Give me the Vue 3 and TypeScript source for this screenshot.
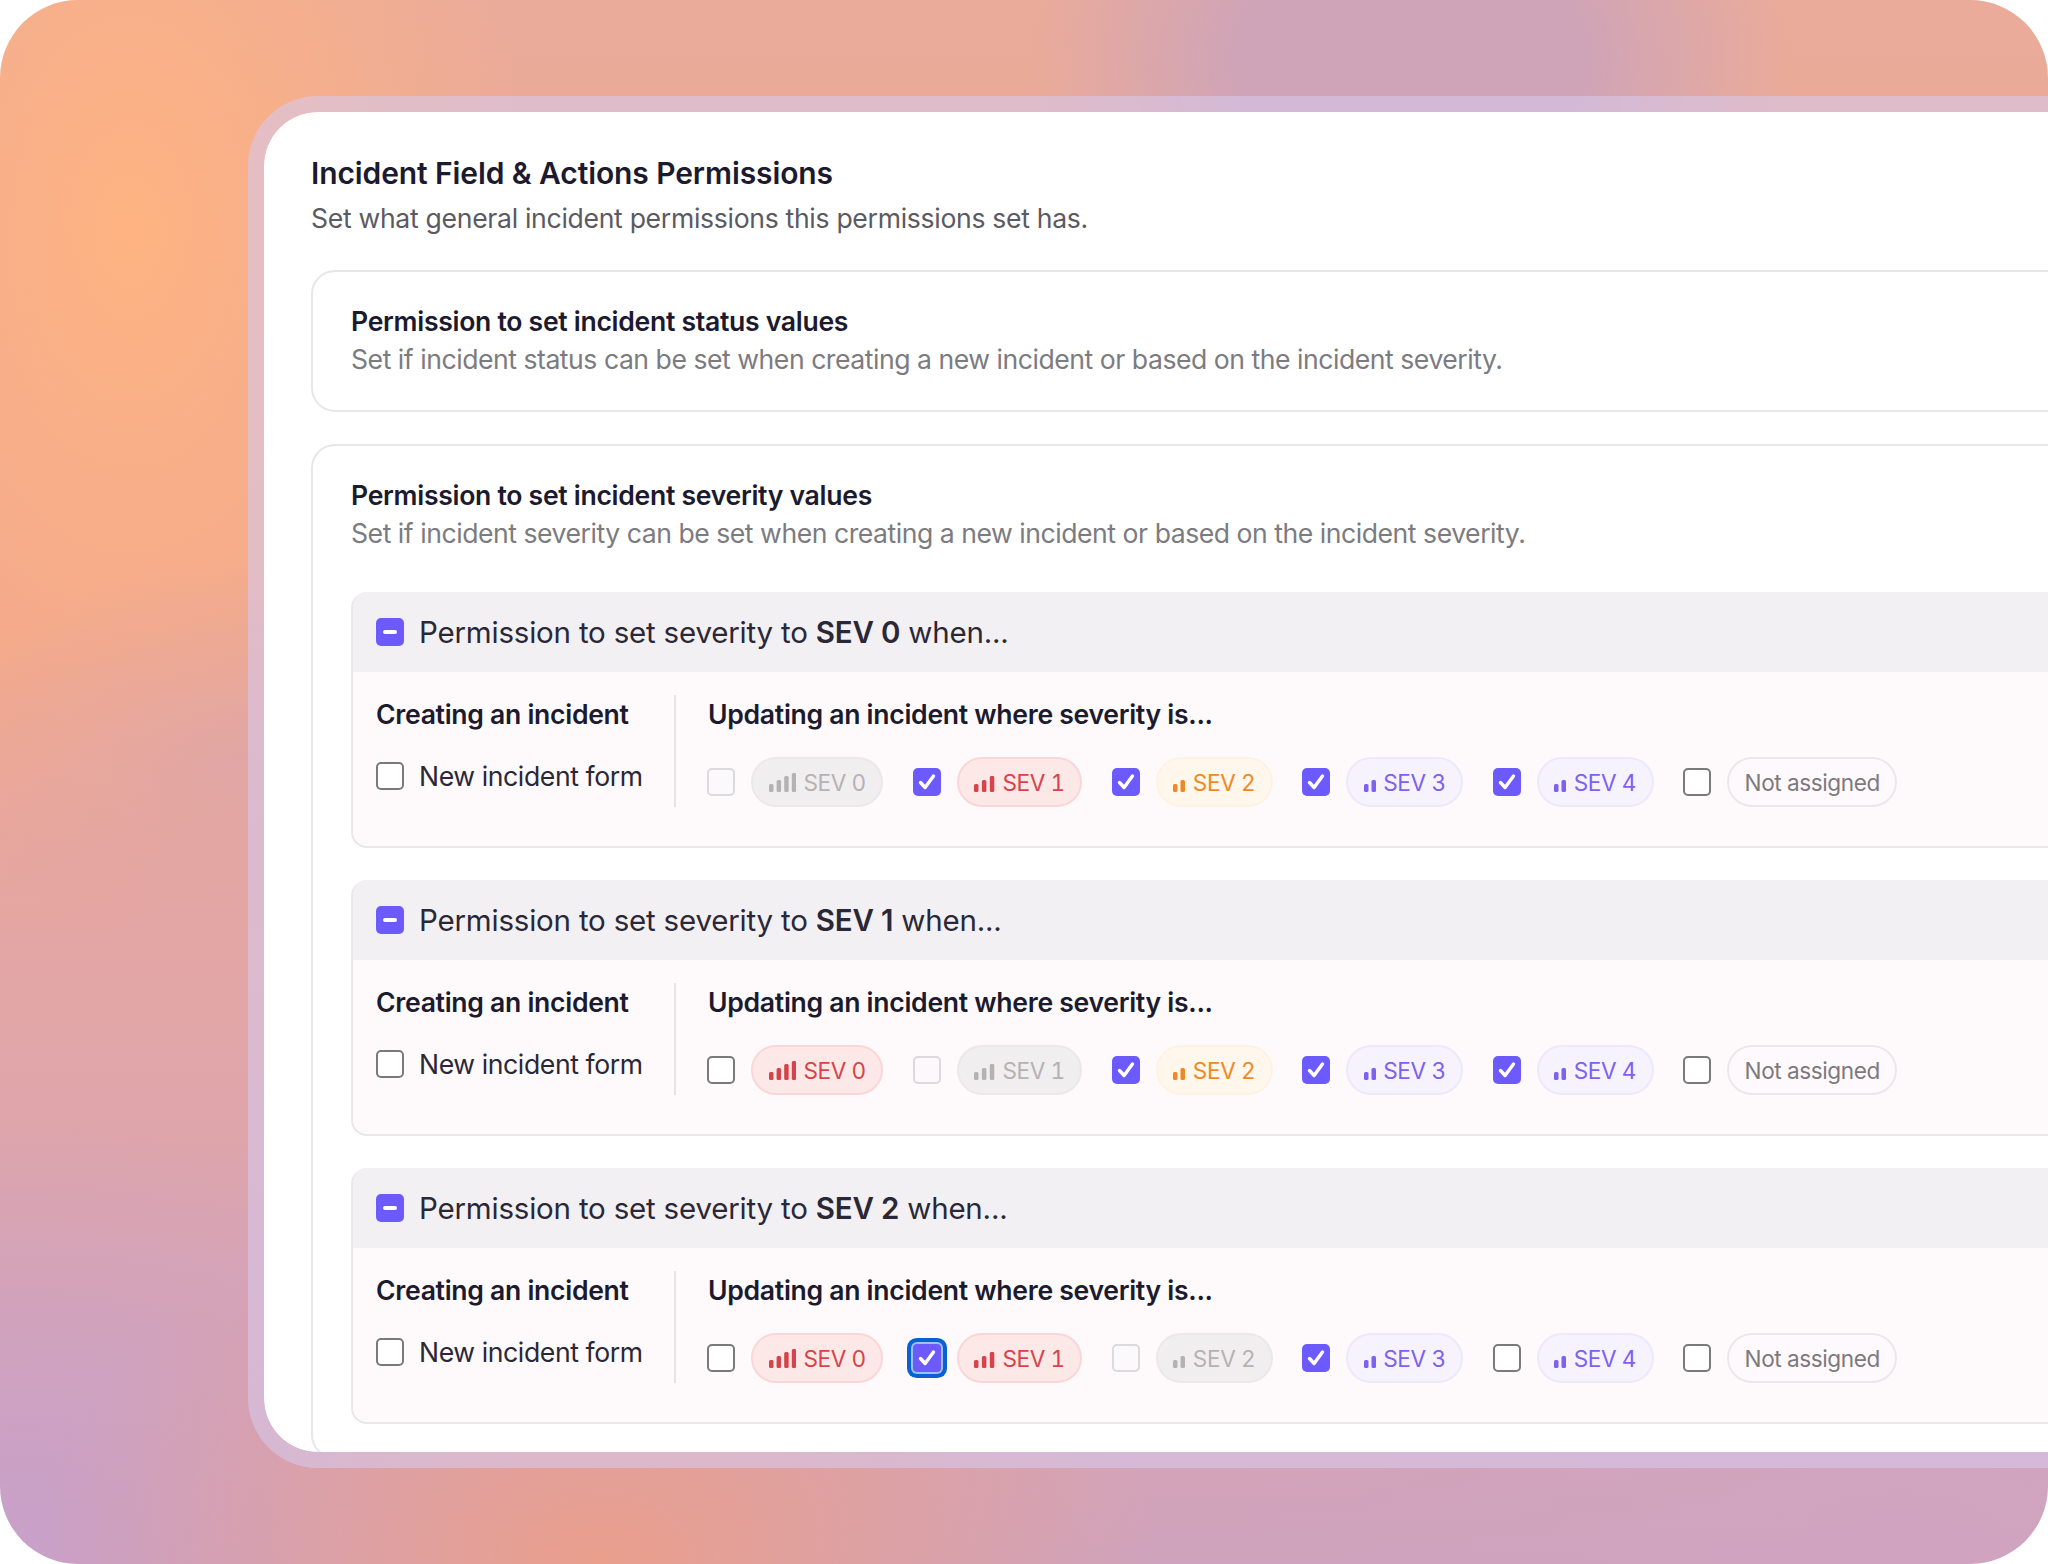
<script setup lang="ts">
type Tone = 'red' | 'orange' | 'purple' | 'muted' | 'plain'
type State = 'off' | 'on' | 'disabled' | 'focus'

interface Option {
  label: string
  bars: number
  tone: Tone
  state: State
}

interface Group {
  sev: string
  options: Option[]
}

const barHeights = [8, 12, 16, 19]

// spacing differs a little per icon in the design
function barStep(count: number) {
  if (count === 4) return 7.6
  return count === 3 ? 7.9 : 7.5
}

function barsWidth(count: number) {
  return count * barStep(count) - 3
}

function makeOptions(states: State[], disabledAt: number): Option[] {
  const base: { label: string; bars: number; tone: Tone }[] = [
    { label: 'SEV 0', bars: 4, tone: 'red' },
    { label: 'SEV 1', bars: 3, tone: 'red' },
    { label: 'SEV 2', bars: 2, tone: 'orange' },
    { label: 'SEV 3', bars: 2, tone: 'purple' },
    { label: 'SEV 4', bars: 2, tone: 'purple' },
    { label: 'Not assigned', bars: 0, tone: 'plain' },
  ]
  return base.map((o, i) => ({
    ...o,
    tone: i === disabledAt ? 'muted' : o.tone,
    state: states[i],
  }))
}

const groups: Group[] = [
  { sev: 'SEV 0', options: makeOptions(['disabled', 'on', 'on', 'on', 'on', 'off'], 0) },
  { sev: 'SEV 1', options: makeOptions(['off', 'disabled', 'on', 'on', 'on', 'off'], 1) },
  { sev: 'SEV 2', options: makeOptions(['off', 'focus', 'disabled', 'on', 'off', 'off'], 2) },
]
</script>

<template>
  <div class="page">
    <main class="card">
      <h1>Incident Field &amp; Actions Permissions</h1>
      <p class="lead">Set what general incident permissions this permissions set has.</p>

      <section class="box first">
        <h2>Permission to set incident status values</h2>
        <p>Set if incident status can be set when creating a new incident or based on the incident severity.</p>
      </section>

      <section class="box">
        <h2>Permission to set incident severity values</h2>
        <p>Set if incident severity can be set when creating a new incident or based on the incident severity.</p>

        <div class="groups">
          <div v-for="group in groups" :key="group.sev" class="group">
            <div class="group-head">
              <span class="check indeterminate"><i></i></span>
              <span>Permission to set severity to <b>{{ group.sev }}</b> when...</span>
            </div>
            <div class="group-body">
              <div class="creating">
                <h3>Creating an incident</h3>
                <label class="form-row">
                  <span class="check off"></span>
                  <span>New incident form</span>
                </label>
              </div>
              <div class="updating">
                <h3>Updating an incident where severity is...</h3>
                <div class="options">
                  <div v-for="opt in group.options" :key="opt.label" class="option">
                    <span class="check" :class="opt.state">
                      <svg v-if="opt.state === 'on' || opt.state === 'focus'" viewBox="0 0 28 28" width="28" height="28">
                        <path d="M7.5 14.5l4.6 5L20.5 8" fill="none" stroke="#fff" stroke-width="3.4" stroke-linecap="round" stroke-linejoin="round" />
                      </svg>
                    </span>
                    <span class="pill" :class="opt.tone">
                      <svg v-if="opt.bars" class="bars" :width="barsWidth(opt.bars)" height="19" :viewBox="`0 0 ${barsWidth(opt.bars)} 19`">
                        <rect
                          v-for="n in opt.bars"
                          :key="n"
                          :x="(n - 1) * barStep(opt.bars)"
                          :y="19 - barHeights[n - 1]"
                          width="4.5"
                          :height="barHeights[n - 1]"
                          rx="1.5"
                          fill="currentColor"
                        />
                      </svg>
                      {{ opt.label }}
                    </span>
                  </div>
                </div>
              </div>
            </div>
          </div>
        </div>
      </section>
    </main>
  </div>
</template>

<style scoped>
.page {
  width: 2048px;
  height: 1564px;
  box-sizing: border-box;
  padding: 96px 0 96px 248px;
  overflow: hidden;
  border-radius: 78px;
  font-family: Inter, "Liberation Sans", sans-serif;
  color: #1c1a2e;
  background:
    radial-gradient(380px 260px at 1410px 60px, #cfa4b8 45%, rgba(207, 164, 184, 0) 100%),
    radial-gradient(560px 380px at 600px 1560px, #ea9f8c 0%, rgba(234, 159, 140, 0) 100%),
    radial-gradient(640px 440px at 0px 1560px, #c8a0c9 0%, rgba(200, 160, 201, 0) 100%),
    radial-gradient(700px 400px at 1900px 1560px, #d0a3c0 0%, rgba(208, 163, 192, 0) 100%),
    radial-gradient(300px 200px at 240px 760px, rgba(219, 165, 172, 0.7) 0%, rgba(219, 165, 172, 0) 100%),
    radial-gradient(400px 640px at 130px 230px, #ffb382 0%, rgba(255, 179, 130, 0) 100%),
    linear-gradient(180deg, #eaab9a 0%, #f0a78e 42%, #e4a6a4 60%, #d8a4b2 85%, #cfa3bd 100%);
}

.card {
  box-sizing: border-box;
  width: 2000px;
  height: 1372px;
  padding: 41px 0 0 47px;
  overflow: hidden;
  background: #fff padding-box;
  border: 16px solid rgba(215, 200, 235, 0.6);
  border-radius: 70px;
}

h1 {
  margin: 0;
  font-size: 30px;
  line-height: 40px;
  font-weight: 600;
  letter-spacing: -0.1px;
}

.lead {
  margin: 7px 0 34px;
  font-size: 26.6px;
  line-height: 36px;
  letter-spacing: -0.31px;
  color: #5b5a62;
}

.box {
  padding: 31px 38px 33px;
  border: 2px solid #e7e6ea;
  border-radius: 24px;
}

.box.first {
  margin-bottom: 32px;
}

h2 {
  margin: 0 0 2px;
  font-size: 26.6px;
  line-height: 36px;
  font-weight: 600;
  letter-spacing: -0.3px;
}

.box p {
  margin: 0;
  font-size: 26.6px;
  line-height: 36px;
  letter-spacing: -0.47px;
  color: #7c7b80;
}

.groups {
  display: flex;
  flex-direction: column;
  gap: 32px;
  margin-top: 41px;
}

.group {
  height: 256px;
  box-sizing: border-box;
  background: #fefafc;
  border-left: 2px solid #e9e7ea;
  border-bottom: 2px solid #e9e7ea;
  border-radius: 16px;
  overflow: hidden;
}

.group-head {
  display: flex;
  align-items: center;
  gap: 15px;
  height: 80px;
  padding-left: 23px;
  font-size: 29.5px;
  letter-spacing: -0.2px;
  color: #2a2836;
  background: #f3f0f3;
}

.group-head b {
  font-weight: 600;
}

.group-body {
  display: flex;
  padding-top: 23px;
}

h3 {
  margin: 0;
  font-size: 26.6px;
  line-height: 38px;
  font-weight: 600;
  letter-spacing: -0.3px;
}

.creating {
  box-sizing: border-box;
  width: 323px;
  height: 112px;
  padding-left: 23px;
  border-right: 2px solid #e6e3e6;
}

.form-row {
  display: flex;
  align-items: center;
  gap: 15px;
  height: 36px;
  margin-top: 25px;
  font-size: 26.6px;
  letter-spacing: -0.4px;
  color: #2a2836;
}

.updating {
  padding-left: 32px;
}

.options {
  display: flex;
  gap: 29.5px;
  margin: 24px 0 0 -1px;
}

.option {
  display: flex;
  align-items: center;
  gap: 16px;
}

.check {
  position: relative;
  flex: none;
  display: block;
  box-sizing: border-box;
  width: 28px;
  height: 28px;
  border-radius: 5px;
}

.check svg {
  display: block;
}

.check.off {
  background: #fff;
  border: 2px solid #7c787b;
}

.check.disabled {
  background: #fbf9fb;
  border: 2px solid #dcdadc;
}

.check.on,
.check.focus,
.check.indeterminate {
  background: #6d5afc;
}

.check.focus {
  box-shadow:
    0 0 0 2px #9cc0f4,
    0 0 0 6px #0862d4;
  border-radius: 4px;
}

.check.indeterminate i {
  position: absolute;
  left: 7px;
  top: 12px;
  width: 14px;
  height: 4px;
  border-radius: 2px;
  background: #fff;
}

.pill {
  display: flex;
  align-items: center;
  gap: 7.5px;
  box-sizing: border-box;
  height: 50px;
  padding: 0 15.5px;
  border: 2px solid transparent;
  border-radius: 25px;
  font-size: 22.6px;
  font-variant-numeric: tabular-nums;
  letter-spacing: -0.4px;
  white-space: nowrap;
}

.pill.red {
  background: #fde8e8;
  border-color: #fad6d7;
  color: #d6434a;
}

.pill.orange {
  background: #fff6ec;
  border-color: #fff2e4;
  color: #ee8a25;
}

.pill.purple {
  background: #f6f3fe;
  border-color: #ece9fb;
  color: #7c62ee;
}

.pill.muted {
  background: #f1eef0;
  border-color: #ebe8ea;
  color: #b5b2b4;
}

.pill.plain {
  background: #fdf9fc;
  border-color: #ece8ea;
  color: #7d797c;
}
</style>
